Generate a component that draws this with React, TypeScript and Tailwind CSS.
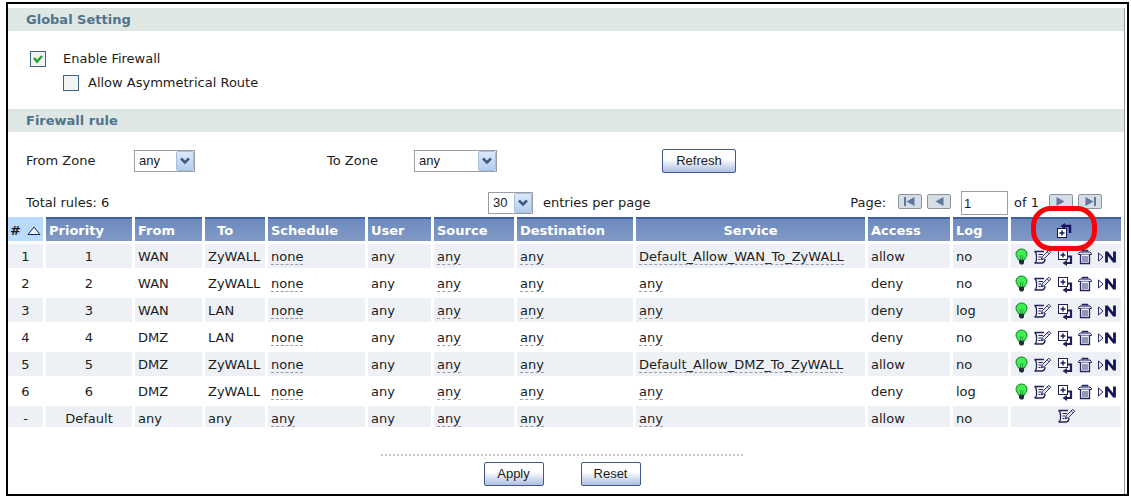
import type { ReactNode } from "react";

type Rule = {
	id: string;
	priority: string;
	from: string;
	to: string;
	schedule: string;
	service: string;
	access: string;
	log: string;
};

const rules: Rule[] = [
	{ id: "1", priority: "1", from: "WAN", to: "ZyWALL", schedule: "none", service: "Default_Allow_WAN_To_ZyWALL", access: "allow", log: "no" },
	{ id: "2", priority: "2", from: "WAN", to: "ZyWALL", schedule: "none", service: "any", access: "deny", log: "no" },
	{ id: "3", priority: "3", from: "WAN", to: "LAN", schedule: "none", service: "any", access: "deny", log: "log" },
	{ id: "4", priority: "4", from: "DMZ", to: "LAN", schedule: "none", service: "any", access: "deny", log: "no" },
	{ id: "5", priority: "5", from: "DMZ", to: "ZyWALL", schedule: "none", service: "Default_Allow_DMZ_To_ZyWALL", access: "allow", log: "no" },
	{ id: "6", priority: "6", from: "DMZ", to: "ZyWALL", schedule: "none", service: "any", access: "deny", log: "log" },
	{ id: "-", priority: "Default", from: "any", to: "any", schedule: "any", service: "any", access: "allow", log: "no" },
];

function BulbIcon() {
	return (
		<svg width="13" height="18" viewBox="0 0 13 18" aria-hidden="true">
			<path d="M6.5 1C3.500 1 1 3.200 1 6c0 2.500 1.700 3.600 2.500 6h6c.8-2.400 2.500-3.500 2.500-6 0-2.800-2.500-5-5.500-5z" fill="#3fee50" stroke="#167a2c" />
			<path d="M4.500 7.500l1 1 1-1 1 1 1-1M5.500 8.500V12M7.500 8.500V12" fill="none" stroke="#17862c" strokeWidth=".7" />
			<path d="M4 12h5v3L8 16.500H5.500L4 15z" fill="#20303a" />
		</svg>
	);
}

function EditIcon() {
	return (
		<svg width="19" height="16" viewBox="0 0 19 16" fill="none" stroke="#23235f" aria-hidden="true">
			<path d="M11 2.500H1.500C3.500 3.500 3.500 5 3.500 7v3.500c0 2-.5 3-2 3.500H9.500c1.500-.3 2.500-1.500 2.500-4" fill="#f4f5fb" strokeWidth="1.300" />
			<path d="M5.500 5.500h4.500M5.500 8H8.500M5.500 10.500H7.500" strokeWidth="1.200" />
			<path d="M8.500 10.500l.8-2.800L15.800 1.200l2 2L11.300 9.700z" fill="#e4e7f3" strokeWidth=".9" />
			<path d="M14.200 2.800l2 2" strokeWidth=".9" />
			<path d="M8 11.300l.7-2.300 1.600 1.600z" fill="#23235f" stroke="none" />
		</svg>
	);
}

function InsertIcon() {
	return (
		<svg width="16" height="17" viewBox="0 0 16 17" fill="none" stroke="#20205c" aria-hidden="true">
			<path d="M10.500 7.500h3.500V14H9" strokeWidth="2.200" />
			<path d="M10 11v6l-4.500-3z" fill="#20205c" stroke="none" />
			<rect x="1.500" y="1.500" width="9" height="9" fill="#fff" />
			<path d="M6 3.500v5M3.500 6h5" strokeWidth="1.500" />
		</svg>
	);
}

function AddIcon() {
	return (
		<svg width="16" height="16" viewBox="0 0 16 16" fill="none" stroke="#14145a" aria-hidden="true">
			<path d="M14 10V3H8" strokeWidth="2.500" />
			<path d="M9 0v6L4.500 3z" fill="#14145a" stroke="none" />
			<rect x="1.500" y="5.500" width="9" height="9" fill="#fff" />
			<path d="M6 7.500v5M3.500 10h5" strokeWidth="1.500" />
		</svg>
	);
}

function TrashIcon() {
	return (
		<svg width="14" height="16" viewBox="0 0 14 16" fill="none" stroke="#23235f" aria-hidden="true">
			<path d="M4.500 2.500v-1h5v1" strokeWidth="1.500" />
			<path d="M.5 5.500v-1l1.500-1.500h10l1.500 1.500v1z" fill="#d9dcec" />
			<path d="M2.500 5.500v9h9v-9" fill="#f4f5fb" strokeWidth="1.300" />
			<path d="M5 7v6M7 7v6M9 7v6" strokeWidth=".9" />
		</svg>
	);
}

function MoveIcon() {
	return (
		<svg width="20" height="14" viewBox="0 0 20 14" fill="none" stroke="#14145a" aria-hidden="true">
			<path d="M1.500 3v8l4.500-4z" strokeWidth=".9" />
			<path d="M9.500 12.500v-11M17.500 1.500v11M9.500 2l8 10" strokeWidth="2.800" />
		</svg>
	);
}

function IconButton({ label, children }: { label: string; children: ReactNode }) {
	return (
		<button type="button" aria-label={label} className="flex h-5 items-center">
			{children}
		</button>
	);
}

function Section({ title }: { title: string }) {
	return <h2 className="h-[23px] bg-[#dfe7e5] pl-[18px] text-[13px] leading-[23px] font-bold text-[#50748c]">{title}</h2>;
}

function CheckBox({ id, checked }: { id: string; checked?: boolean }) {
	return (
		<span className="relative flex size-4">
			<input id={id} type="checkbox" defaultChecked={checked} className="peer size-4 appearance-none border border-[#3f6482] bg-[#f2f4f4]" />
			<svg width="16" height="16" viewBox="0 0 16 16" fill="none" stroke="#2ba12b" strokeWidth="2.500" className="pointer-events-none absolute inset-0 hidden peer-checked:block" aria-hidden="true">
				<path d="M4 7l3 3.500L12 5" />
			</svg>
		</span>
	);
}

type PickerProps = { id: string; label?: string; value: string; width: string };

function Picker({ id, label, value, width }: PickerProps) {
	return (
		<span className={"relative inline-flex h-[22px] border border-[#9a9fa5] bg-white " + width}>
			<select id={id} aria-label={label} className="w-full appearance-none pl-1 font-['Liberation_Sans',sans-serif] text-[13px] leading-5 outline-none">
				<option>{value}</option>
			</select>
			<span className="pointer-events-none absolute inset-y-0 right-0 flex w-[18px] items-center justify-center rounded-xs border border-[#a8bfdc] bg-gradient-to-b from-[#dbe9fa] to-[#b4cdec]">
				<svg width="10" height="8" viewBox="0 0 10 8" fill="none" stroke="#3d5a80" strokeWidth="2.500" aria-hidden="true">
					<path d="M1 1.500l4 4 4-4" />
				</svg>
			</span>
		</span>
	);
}

function Button({ children, width }: { children: ReactNode; width: string }) {
	return (
		<button type="button" className={"h-6 rounded-xs border border-[#42598e] bg-gradient-to-b from-white from-40% to-[#aebfe2] font-['Liberation_Sans',sans-serif] text-[13px] leading-5 " + width}>
			{children}
		</button>
	);
}

function PageButton({ label, flip, end }: { label: string; flip?: boolean; end?: boolean }) {
	return (
		<button type="button" aria-label={label} className="mb-1 flex h-[15px] w-6 items-center justify-center rounded-xs border border-[#8e949c] bg-[#d5dde6]">
			<svg width="16" height="11" viewBox="0 0 16 11" className={flip ? "rotate-180" : ""} aria-hidden="true">
				<path d="M12.500 1v9L4.500 5.500z" fill="#62789a" />
				{end && <path d="M3 1v9" stroke="#62789a" strokeWidth="2" />}
			</svg>
		</button>
	);
}

function Dashed({ children }: { children: string }) {
	return <span className="inline-block h-[17px] border-b border-dashed border-[#9a9ea6] align-top">{children}</span>;
}

function HeadCell({ children, className = "px-[3px] text-left" }: { children: ReactNode; className?: string }) {
	return (
		<th scope="col" className={"h-[27px] border-r-3 border-b-3 border-white bg-gradient-to-b from-[#6b89be] to-[#8199c6] bg-clip-padding pt-1 leading-5 font-bold text-white shadow-[inset_0_2px_#40609c] " + className}>
			{children}
		</th>
	);
}

function Cell({ children, className = "px-[3px] pt-1" }: { children: ReactNode; className?: string }) {
	return <td className={"border-r-3 border-b-3 border-white align-top leading-[17px] " + className}>{children}</td>;
}

function RuleRow({ rule }: { rule: Rule }) {
	const isDefault = rule.id === "-";

	return (
		<tr className={"odd:bg-[#edf1f6] " + (isDefault ? "h-6" : "h-[27px]")}>
			<Cell className="pt-1 text-center">{rule.id}</Cell>
			<Cell className="pt-1 text-center">{rule.priority}</Cell>
			<Cell>{rule.from}</Cell>
			<Cell>{rule.to}</Cell>
			<Cell><Dashed>{rule.schedule}</Dashed></Cell>
			<Cell>any</Cell>
			<Cell><Dashed>any</Dashed></Cell>
			<Cell><Dashed>any</Dashed></Cell>
			<Cell><Dashed>{rule.service}</Dashed></Cell>
			<Cell>{rule.access}</Cell>
			<Cell>{rule.log}</Cell>
			{isDefault ? (
				<Cell>
					<div className="-mt-1 flex justify-center">
						<IconButton label="Edit default rule"><EditIcon /></IconButton>
					</div>
				</Cell>
			) : (
				<Cell className="px-0.5 pt-[3px]">
					<div className="flex items-center justify-center gap-[5px]">
						<IconButton label="Toggle rule"><BulbIcon /></IconButton>
						<IconButton label="Edit rule"><EditIcon /></IconButton>
						<IconButton label="Insert rule"><InsertIcon /></IconButton>
						<IconButton label="Delete rule"><TrashIcon /></IconButton>
						<IconButton label="Move rule"><MoveIcon /></IconButton>
					</div>
				</Cell>
			)}
		</tr>
	);
}

function App() {
	return (
		<div className="bg-white pt-0.5 pr-0.5 pl-1.5 font-['DejaVu_Sans',sans-serif] text-[13px] leading-4 text-[#1c1c1c]">
			<main className="border-2 border-black pt-1">
				<div className="mr-0.5 border-r border-[#9a9a9a] pb-2">
					<Section title="Global Setting" />
					<div className="flex flex-col gap-2 pt-5 pb-[18px] pl-[22px]">
						<div className="flex h-4 items-center gap-[17px]">
							<CheckBox id="enable" checked />
							<label htmlFor="enable">Enable Firewall</label>
						</div>
						<div className="flex h-4 items-center gap-[9px] pl-[33px]">
							<CheckBox id="asymmetrical" />
							<label htmlFor="asymmetrical">Allow Asymmetrical Route</label>
						</div>
					</div>
					<Section title="Firewall rule" />

					<div className="flex h-[57px] items-center pl-[18px]">
						<label htmlFor="from-zone" className="w-[108px]">From Zone</label>
						<Picker id="from-zone" value="any" width="w-[61px]" />
						<label htmlFor="to-zone" className="ml-[132px] w-[87px]">To Zone</label>
						<Picker id="to-zone" value="any" width="w-[83px]" />
						<div className="ml-[165px]">
							<Button width="w-[74px]">Refresh</Button>
						</div>
					</div>

					<div className="flex h-7 items-center pl-[18px]">
						<span className="w-[462px]">Total rules: 6</span>
						<Picker id="per-page" value="30" width="w-[45px]" />
						<label htmlFor="per-page" className="ml-2.5">entries per page</label>
						<div className="ml-auto flex items-center pr-[22px]">
							<label htmlFor="page" className="mr-3">Page:</label>
							<PageButton label="First page" end />
							<span className="w-[5px]" />
							<PageButton label="Previous page" />
							<input id="page" defaultValue="1" className="mr-1.5 ml-2.5 h-6 w-[47px] border border-[#9a9fa5] px-0.5 font-['Liberation_Sans',sans-serif] text-[13px]" />
							<span className="mr-2.5">of 1</span>
							<PageButton label="Next page" flip />
							<span className="w-[5px]" />
							<PageButton label="Last page" flip end />
						</div>
					</div>

					<table className="w-full table-fixed border-separate border-spacing-0">
						<colgroup>
							<col className="w-[38px]" />
							<col className="w-[89px]" />
							<col className="w-[70px]" />
							<col className="w-[63px]" />
							<col className="w-[100px]" />
							<col className="w-[66px]" />
							<col className="w-[83px]" />
							<col className="w-[119px]" />
							<col />
							<col className="w-[85px]" />
							<col className="w-[58px]" />
							<col className="w-[113px]" />
						</colgroup>
						<thead>
							<tr>
								<th scope="col" className="h-[27px] border-r-3 border-b-3 border-white bg-[#b9dbfd] bg-clip-padding px-0.5 pt-1 font-bold">
									<div className="flex items-center justify-between">
										#
										<svg width="14" height="10" viewBox="0 0 14 10" fill="#eaf4ff" stroke="#23235f" aria-hidden="true">
											<path d="M7 1L1 8.500h12z" />
										</svg>
									</div>
								</th>
								<HeadCell>Priority</HeadCell>
								<HeadCell>From</HeadCell>
								<HeadCell className="pl-3 text-left">To</HeadCell>
								<HeadCell>Schedule</HeadCell>
								<HeadCell>User</HeadCell>
								<HeadCell>Source</HeadCell>
								<HeadCell>Destination</HeadCell>
								<HeadCell className="text-center">Service</HeadCell>
								<HeadCell>Access</HeadCell>
								<HeadCell>Log</HeadCell>
								<HeadCell className="pr-1 text-center">
									<div className="relative flex justify-center">
										<IconButton label="Add rule"><AddIcon /></IconButton>
										{/* callout ring round the add button */}
										<span className="pointer-events-none absolute -top-[15px] left-1/2 h-[45px] w-[66px] -translate-x-1/2 rounded-[20px] border-5 border-[#fb0007]" />
									</div>
								</HeadCell>
							</tr>
						</thead>
						<tbody>
							{rules.map((rule) => <RuleRow key={rule.id} rule={rule} />)}
						</tbody>
					</table>

					<div className="mr-2 flex flex-col items-center">
						<div className="mt-6 w-[362px] border-t-2 border-dotted border-[#c9c5c0]" />
						<div className="mt-1.5 flex gap-[37px]">
							<Button width="w-[60px]">Apply</Button>
							<Button width="w-[60px]">Reset</Button>
						</div>
					</div>
				</div>
			</main>
		</div>
	);
}

export default App;
